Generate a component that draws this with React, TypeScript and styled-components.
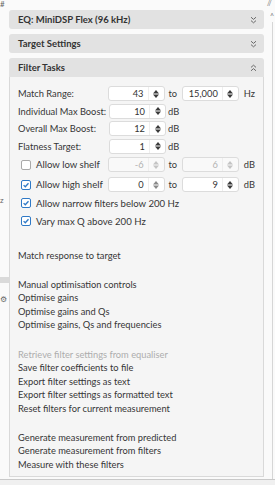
import React from 'react'
import styled, { createGlobalStyle } from 'styled-components'

const GlobalStyle = createGlobalStyle`
  html, body {
    margin: 0;
    padding: 0;
    background: #fafafa;
  }
  body {
    font-family: Lato, "Open Sans", sans-serif;
    color: #363636;
  }
`

const Page = styled.div`
  width: 275px;
  height: 485px;
  display: flex;
  flex-direction: column;
  overflow: hidden;
  background: #fafafa;
`

const Columns = styled.div`
  display: flex;
  height: 479px;
`

const BottomRule = styled.div`
  flex: 1;
  border-top: 1px solid #c9c9c9;
  background: #f0f0f0;
`

const LeftStrip = styled.div`
  width: 9px;
  display: flex;
  flex-direction: column;
  align-items: flex-start;
  font-size: 8px;
  color: #666;
`

const StripGlyph = styled.div<{ $top: number }>`
  margin-top: ${p => p.$top}px;
  line-height: 8px;
  white-space: nowrap;
`

const StripBar = styled.div<{ $top: number }>`
  margin-top: ${p => p.$top}px;
  width: 9px;
  height: 6px;
  background: #dadada;
`

const RightStrip = styled.div`
  flex: 1;
  display: flex;
  flex-direction: column;
  font-size: 7px;
  color: #777;
`

const RightGlyph = styled.div<{ $top: number; $left: number }>`
  margin-top: ${p => p.$top}px;
  padding-left: ${p => p.$left}px;
  line-height: 7px;
`

const RightLine = styled.div`
  flex: 1;
  margin-left: 8px;
  margin-top: 2px;
  border-left: 1px solid #d6d6d6;
`

const Main = styled.div`
  width: 255px;
  padding-top: 10px;
  display: flex;
  flex-direction: column;
  gap: 5px;
`

const Header = styled.div<{ $open?: boolean }>`
  height: 19px;
  box-sizing: border-box;
  padding: 0 7px 0 9px;
  display: flex;
  align-items: center;
  justify-content: space-between;
  background: #e2e2e2;
  border-radius: ${p => (p.$open ? '3px 3px 0 0' : '3px')};
  font-size: 9.5px;
  font-weight: 700;
  color: #333;
`

const Section = styled.div`
  display: flex;
  flex-direction: column;
`

const Body = styled.div`
  height: 400px;
  box-sizing: border-box;
  padding: 9px 8px 0 8px;
  background: #f5f5f5;
  border: 1px solid #d9d9d9;
  border-top: none;
  font-size: 9.3px;
`

const Form = styled.div`
  display: flex;
  flex-direction: column;
`

const Row = styled.div<{ $top?: number }>`
  height: 15px;
  margin-top: ${p => p.$top ?? 2.5}px;
  display: flex;
  align-items: center;
  &:first-child {
    margin-top: 0;
  }
`

const Label = styled.div`
  width: 91px;
  white-space: nowrap;
`

const CheckLabel = styled.label<{ $wide?: boolean }>`
  ${p => (p.$wide ? '' : 'width: 88px;')}
  margin-left: 3px;
  display: flex;
  align-items: center;
  gap: 5px;
  white-space: nowrap;
  font-size: 9.6px;
`

const Box = styled.span<{ $checked?: boolean }>`
  width: 10px;
  height: 10px;
  box-sizing: border-box;
  border: 1px solid ${p => (p.$checked ? '#2f79c6' : '#a9a9a9')};
  border-radius: 2px;
  background: #fff;
  display: flex;
  align-items: center;
  justify-content: center;
`

const Spin = styled.div<{ $disabled?: boolean }>`
  width: 57px;
  height: 15px;
  box-sizing: border-box;
  display: flex;
  background: ${p => (p.$disabled ? '#f9f9f9' : '#fff')};
  border: 1px solid #dcdcdc;
  border-radius: 3px;
  color: ${p => (p.$disabled ? '#b3b3b3' : '#333')};
`

const SpinValue = styled.div`
  flex: 1;
  text-align: right;
  padding-right: 4px;
  line-height: 13px;
`

const SpinArrows = styled.div`
  width: 15px;
  border-left: 1px solid #eeeeee;
  display: flex;
  align-items: center;
  justify-content: center;
`

const Word = styled.div<{ $w?: number; $pad?: number }>`
  ${p => (p.$w ? `width: ${p.$w}px;` : '')}
  padding-left: ${p => p.$pad ?? 0}px;
  box-sizing: border-box;
`

const Actions = styled.div<{ $top: number }>`
  margin-top: ${p => p.$top}px;
  display: flex;
  flex-direction: column;
`

const Action = styled.div<{ $disabled?: boolean }>`
  line-height: 13.5px;
  color: ${p => (p.$disabled ? '#adadad' : '#363636')};
  white-space: nowrap;
`

const Chevrons = ({ up }: { up?: boolean }) => (
  <svg width="7" height="8" viewBox="0 0 7 8">
    <g fill="none" stroke="#6a6a6a" strokeWidth="1" transform={up ? 'rotate(180 3.5 4)' : undefined}>
      <path d="M1 1.2 L3.5 3.4 L6 1.2" />
      <path d="M1 4.6 L3.5 6.8 L6 4.6" />
    </g>
  </svg>
)

const UpDown = ({ color = '#3a3a3a' }: { color?: string }) => (
  <svg width="6" height="8" viewBox="0 0 6 8">
    <polygon points="0,3.4 3,0 6,3.4" fill={color} />
    <polygon points="0,4.6 3,8 6,4.6" fill={color} />
  </svg>
)

const Tick = () => (
  <svg width="8" height="8" viewBox="0 0 8 8">
    <polyline points="1.6,4.1 3.3,5.8 6.5,2.2" fill="none" stroke="#2f79c6" strokeWidth="1.3" />
  </svg>
)

type SpinProps = { value: string; disabled?: boolean; arrow?: string }

const SpinBox = ({ value, disabled, arrow }: SpinProps) => (
  <Spin $disabled={disabled}>
    <SpinValue>{value}</SpinValue>
    <SpinArrows>
      <UpDown color={disabled ? '#c4c4c4' : arrow} />
    </SpinArrows>
  </Spin>
)

const Check = ({ checked, label, wide }: { checked?: boolean; label: string; wide?: boolean }) => (
  <CheckLabel $wide={wide}>
    <Box $checked={checked}>{checked && <Tick />}</Box>
    {label}
  </CheckLabel>
)

const App: React.FC = () => {
  return (
    <Page>
      <GlobalStyle />
      <Columns>
        <LeftStrip>
          <StripGlyph $top={0}>#</StripGlyph>
          <StripGlyph $top={188}>z</StripGlyph>
          <StripBar $top={73} />
          <StripGlyph $top={12}>⚙</StripGlyph>
        </LeftStrip>
        <Main>
          <Header>
            EQ: MiniDSP Flex (96 kHz)
            <Chevrons />
          </Header>
          <Header>
            Target Settings
            <Chevrons />
          </Header>
          <Section>
            <Header $open>
              Filter Tasks
              <Chevrons up />
            </Header>
            <Body>
              <Form>
                <Row>
                  <Label>Match Range:</Label>
                  <SpinBox value="43" />
                  <Word $w={18} $pad={4}>to</Word>
                  <SpinBox value="15,000" />
                  <Word $pad={5}>Hz</Word>
                </Row>
                <Row>
                  <Label>Individual Max Boost:</Label>
                  <SpinBox value="10" />
                  <Word $pad={2}>dB</Word>
                </Row>
                <Row>
                  <Label>Overall Max Boost:</Label>
                  <SpinBox value="12" />
                  <Word $pad={2}>dB</Word>
                </Row>
                <Row>
                  <Label>Flatness Target:</Label>
                  <SpinBox value="1" />
                  <Word $pad={2}>dB</Word>
                </Row>
                <Row $top={3.5}>
                  <Check label="Allow low shelf" />
                  <SpinBox value="-6" disabled />
                  <Word $w={18} $pad={4}>to</Word>
                  <SpinBox value="6" disabled />
                  <Word $pad={5}>dB</Word>
                </Row>
                <Row $top={5}>
                  <Check checked label="Allow high shelf" />
                  <SpinBox value="0" arrow="#8a8a8a" />
                  <Word $w={18} $pad={4}>to</Word>
                  <SpinBox value="9" />
                  <Word $pad={5}>dB</Word>
                </Row>
                <Row $top={3.5}>
                  <Check checked wide label="Allow narrow filters below 200 Hz" />
                </Row>
                <Row $top={3}>
                  <Check checked wide label="Vary max Q above 200 Hz" />
                </Row>
              </Form>

              <Actions $top={20}>
                <Action>Match response to target</Action>
              </Actions>

              <Actions $top={15.5}>
                <Action>Manual optimisation controls</Action>
                <Action>Optimise gains</Action>
                <Action>Optimise gains and Qs</Action>
                <Action>Optimise gains, Qs and frequencies</Action>
              </Actions>

              <Actions $top={16}>
                <Action $disabled>Retrieve filter settings from equaliser</Action>
                <Action>Save filter coefficients to file</Action>
                <Action>Export filter settings as text</Action>
                <Action>Export filter settings as formatted text</Action>
                <Action>Reset filters for current measurement</Action>
              </Actions>

              <Actions $top={15.5}>
                <Action>Generate measurement from predicted</Action>
                <Action>Generate measurement from filters</Action>
                <Action>Measure with these filters</Action>
              </Actions>
            </Body>
          </Section>
        </Main>
        <RightStrip>
          <RightGlyph $top={0} $left={3}>//</RightGlyph>
          <RightGlyph $top={6} $left={6}>^</RightGlyph>
          <RightLine />
        </RightStrip>
      </Columns>
      <BottomRule />
    </Page>
  )
}

export default App
